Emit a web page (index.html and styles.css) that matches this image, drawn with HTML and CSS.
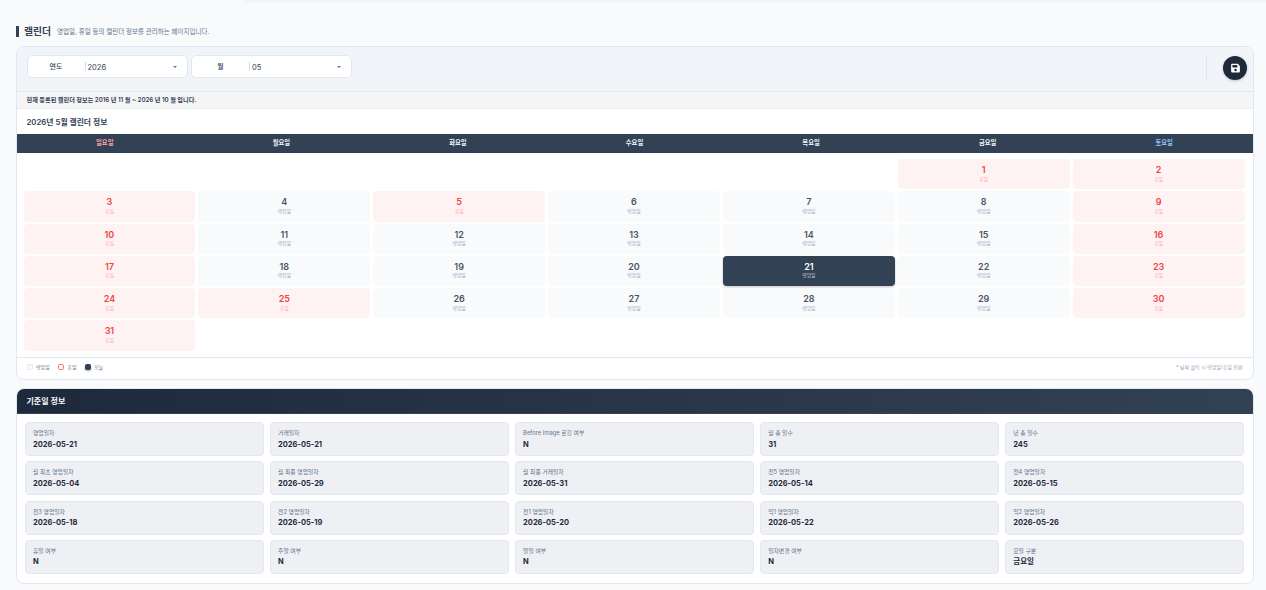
FILE: index.html
```html
<!DOCTYPE html>
<html lang="ko">
<head>
  <meta charset="UTF-8">
  <title>캘린더</title>
  <link rel="stylesheet" href="styles.css">
</head>
<body>
  <div class="top-strip"></div>

  <div class="page-title">
    <h1>캘린더</h1>
    <p>영업일, 휴일 등의 캘린더 정보를 관리하는 페이지입니다.</p>
  </div>

  <!-- Calendar card -->
  <section class="card">
    <div class="toolbar">
      <div class="select-box">
        <span class="select-label">연도</span>
        <span class="select-value">2026</span>
        <span class="caret"></span>
      </div>
      <div class="select-box">
        <span class="select-label">월</span>
        <span class="select-value">05</span>
        <span class="caret"></span>
      </div>
      <div class="toolbar-end">
        <button class="save-btn" aria-label="저장">
          <svg width="9" height="10" viewBox="0 0 448 512"><path fill="#fff" d="M64 32C29 32 0 61 0 96v320c0 35 29 64 64 64h320c35 0 64-29 64-64V173c0-17-7-33-19-45l-77-77c-12-12-28-19-45-19H64zm0 96c0-18 14-32 32-32h192c18 0 32 14 32 32v64c0 18-14 32-32 32H96c-18 0-32-14-32-32v-64zm160 160a64 64 0 1 1 0 128 64 64 0 1 1 0-128z"/></svg>
        </button>
      </div>
    </div>

    <div class="notice">현재 등록된 캘린더 정보는 2016 년 11 월 ~ 2026 년 10 월 입니다.</div>
    <h2 class="cal-title">2026년 5월 캘린더 정보</h2>

    <div class="week-head">
      <span class="sun">일요일</span>
      <span>월요일</span>
      <span>화요일</span>
      <span>수요일</span>
      <span>목요일</span>
      <span>금요일</span>
      <span class="sat">토요일</span>
    </div>

    <div class="cal-grid">
      <div class="blank"></div><div class="blank"></div><div class="blank"></div><div class="blank"></div><div class="blank"></div>
      <div class="day off"><b>1</b><small>휴일</small></div>
      <div class="day off"><b>2</b><small>휴일</small></div>

      <div class="day off"><b>3</b><small>휴일</small></div>
      <div class="day"><b>4</b><small>영업일</small></div>
      <div class="day off"><b>5</b><small>휴일</small></div>
      <div class="day"><b>6</b><small>영업일</small></div>
      <div class="day"><b>7</b><small>영업일</small></div>
      <div class="day"><b>8</b><small>영업일</small></div>
      <div class="day off"><b>9</b><small>휴일</small></div>

      <div class="day off"><b>10</b><small>휴일</small></div>
      <div class="day"><b>11</b><small>영업일</small></div>
      <div class="day"><b>12</b><small>영업일</small></div>
      <div class="day"><b>13</b><small>영업일</small></div>
      <div class="day"><b>14</b><small>영업일</small></div>
      <div class="day"><b>15</b><small>영업일</small></div>
      <div class="day off"><b>16</b><small>휴일</small></div>

      <div class="day off"><b>17</b><small>휴일</small></div>
      <div class="day"><b>18</b><small>영업일</small></div>
      <div class="day"><b>19</b><small>영업일</small></div>
      <div class="day"><b>20</b><small>영업일</small></div>
      <div class="day today"><b>21</b><small>영업일</small></div>
      <div class="day"><b>22</b><small>영업일</small></div>
      <div class="day off"><b>23</b><small>휴일</small></div>

      <div class="day off"><b>24</b><small>휴일</small></div>
      <div class="day off"><b>25</b><small>휴일</small></div>
      <div class="day"><b>26</b><small>영업일</small></div>
      <div class="day"><b>27</b><small>영업일</small></div>
      <div class="day"><b>28</b><small>영업일</small></div>
      <div class="day"><b>29</b><small>영업일</small></div>
      <div class="day off"><b>30</b><small>휴일</small></div>

      <div class="day off"><b>31</b><small>휴일</small></div>
    </div>

    <div class="legend">
      <span class="legend-item"><i class="swatch"></i>영업일</span>
      <span class="legend-item"><i class="swatch swatch-off"></i>휴일</span>
      <span class="legend-item"><i class="swatch swatch-today"></i>오늘</span>
      <span class="legend-note">* 날짜 클릭 시 영업일/휴일 전환</span>
    </div>
  </section>

  <!-- Base date info -->
  <section class="card info-card">
    <h2 class="info-head">기준일 정보</h2>
    <div class="info-grid">
      <div class="info"><label>영업일자</label><strong>2026-05-21</strong></div>
      <div class="info"><label>거래일자</label><strong>2026-05-21</strong></div>
      <div class="info"><label>Before Image 로깅 여부</label><strong>N</strong></div>
      <div class="info"><label>월 총 일수</label><strong>31</strong></div>
      <div class="info"><label>년 총 일수</label><strong>245</strong></div>

      <div class="info"><label>월 최초 영업일자</label><strong>2026-05-04</strong></div>
      <div class="info"><label>월 최종 영업일자</label><strong>2026-05-29</strong></div>
      <div class="info"><label>월 최종 거래일자</label><strong>2026-05-31</strong></div>
      <div class="info"><label>전5 영업일자</label><strong>2026-05-14</strong></div>
      <div class="info"><label>전4 영업일자</label><strong>2026-05-15</strong></div>

      <div class="info"><label>전3 영업일자</label><strong>2026-05-18</strong></div>
      <div class="info"><label>전2 영업일자</label><strong>2026-05-19</strong></div>
      <div class="info"><label>전1 영업일자</label><strong>2026-05-20</strong></div>
      <div class="info"><label>익1 영업일자</label><strong>2026-05-22</strong></div>
      <div class="info"><label>익2 영업일자</label><strong>2026-05-26</strong></div>

      <div class="info"><label>휴일 여부</label><strong>N</strong></div>
      <div class="info"><label>주말 여부</label><strong>N</strong></div>
      <div class="info"><label>말일 여부</label><strong>N</strong></div>
      <div class="info"><label>일자변경 여부</label><strong>N</strong></div>
      <div class="info"><label>요일 구분</label><strong>금요일</strong></div>
    </div>
  </section>
</body>
</html>
```

FILE: styles.css
```css
* {
  box-sizing: border-box;
}

body {
  margin: 0;
  padding: 0 12.5px 0 15.5px;
  height: 590px;
  overflow: hidden;
  background-color: #f8fafc;
  color: #1e293b;
  font-family: Inter, "Noto Sans CJK KR", sans-serif;
}

.top-strip {
  height: 3px;
  margin: 0 -12.5px 0 227.5px;
  background-color: #f1f5f9;
}

/* Page title */
.page-title {
  display: flex;
  align-items: center;
  gap: 6px;
  height: 11px;
  margin: 23px 0 9px 0;
  border-left: 3px solid #334155;
  padding: 0 0 1.5px 5.5px;
}

.page-title h1 {
  margin: 0;
  font-size: 9.8px;
  font-weight: 600;
  color: #334155;
}

.page-title p {
  margin: 0;
  font-size: 6.5px;
  color: #64748b;
}

/* Cards */
.card {
  background-color: #fff;
  border: 1px solid #e2e8f0;
  border-radius: 8px;
  overflow: hidden;
}

.toolbar {
  display: flex;
  align-items: flex-start;
  gap: 3.5px;
  height: 45px;
  padding: 8px 10px;
  background-color: #f1f5f9;
  border-bottom: 1px solid #e2e8f0;
}

.select-box {
  display: flex;
  align-items: center;
  width: 161px;
  height: 23px;
  background-color: #fff;
  border: 1px solid #e2e8f0;
  border-radius: 5px;
}

.select-label {
  width: 58px;
  border-right: 1px solid #d5dbe3;
  font-size: 7px;
  font-weight: 500;
  line-height: 9px;
  text-align: center;
  color: #334155;
}

.select-value {
  flex: 1;
  padding: 1px 0 0 2px;
  font-size: 7.5px;
  color: #334155;
}

.caret {
  margin-right: 10px;
  border-top: 2.5px solid #64748b;
  border-left: 2.5px solid transparent;
  border-right: 2.5px solid transparent;
}

.toolbar-end {
  display: flex;
  align-items: center;
  height: 25px;
  margin-left: auto;
  margin-right: -4.5px;
  padding-left: 16.5px;
  border-left: 1px solid #e2e8f0;
}

.save-btn {
  display: flex;
  align-items: center;
  justify-content: center;
  width: 24px;
  height: 24px;
  margin-top: 1px;
  padding: 0;
  border: none;
  border-radius: 50%;
  background-color: #1e293b;
  box-shadow: 0 1px 3px rgba(0,0,0,0.2);
}

.notice {
  height: 17px;
  padding-left: 10px;
  background-color: #f5f5f5;
  border-bottom: 1px solid #eceef3;
  font-size: 6.15px;
  font-weight: 600;
  line-height: 16.5px;
  color: #334155;
}

.cal-title {
  height: 25px;
  margin: 0;
  padding-left: 10px;
  font-size: 7.8px;
  font-weight: 600;
  line-height: 27px;
  color: #334155;
}

/* Calendar */
.week-head {
  display: grid;
  grid-template-columns: repeat(7, 1fr);
  height: 19px;
  background-color: #334155;
  font-size: 6.3px;
  font-weight: 600;
  line-height: 19px;
  text-align: center;
  color: #f1f5f9;
}

.week-head .sun {
  color: #fca5a5;
}

.week-head .sat {
  color: #93c5fd;
}

.cal-grid {
  display: grid;
  grid-template-columns: repeat(7, 1fr);
  grid-auto-rows: 30.3px;
  gap: 2px 3px;
  height: 204px;
  padding: 6px 8px 0 7px;
}

.day {
  display: flex;
  flex-direction: column;
  align-items: center;
  padding-top: 5px;
  background-color: #f8fafc;
  border-radius: 4px;
  color: #475569;
}

.day b {
  font-size: 9px;
  font-weight: 600;
  line-height: 11.5px;
}

.day small {
  font-size: 4.8px;
  line-height: 6px;
  color: #94a3b8;
}

.day.off {
  background-color: #fef2f2;
  color: #ef4444;
}

.day.off small {
  color: #fca5a5;
}

.day.today {
  background-color: #334155;
  color: #fff;
  box-shadow: 0 1px 3px rgba(0,0,0,0.25);
}

.day.today small {
  color: #cbd5e1;
}

.legend {
  display: flex;
  align-items: center;
  gap: 8px;
  height: 21.5px;
  padding: 0 10px 3px;
  border-top: 1px solid #e2e8f0;
}

.legend-item {
  display: flex;
  align-items: center;
  gap: 3px;
  font-size: 5px;
  color: #64748b;
}

.swatch {
  width: 6.5px;
  height: 6.5px;
  background-color: #f8fafc;
  border: 1px solid #e2e8f0;
  border-radius: 1.5px;
}

.swatch-off {
  background-color: #fff;
  border-color: #f87171;
}

.swatch-today {
  background-color: #334155;
  border-color: #334155;
  box-shadow: 0 1px 2px rgba(51,65,85,0.4);
}

.legend-note {
  margin-left: auto;
  font-size: 5px;
  color: #94a3b8;
}

/* Base date info */
.info-card {
  margin-top: 8px;
  height: 196px;
}

.info-head {
  height: 25.5px;
  margin: 0;
  padding-left: 10px;
  background: linear-gradient(90deg, #1e293b, #334155);
  border-bottom: 1px solid #334155;
  font-size: 8px;
  font-weight: 600;
  line-height: 25px;
  color: #f8fafc;
}

.info-grid {
  display: grid;
  grid-template-columns: repeat(5, 1fr);
  grid-auto-rows: 34px;
  gap: 5.3px;
  padding: 8px 8px 0;
}

.info {
  padding: 6px 7.5px 0;
  background-color: #eef0f3;
  border: 1px solid #e2e8f0;
  border-radius: 4px;
}

.info label {
  display: block;
  font-size: 5.8px;
  line-height: 8px;
  color: #64748b;
}

.info strong {
  display: block;
  margin-top: 1.5px;
  font-size: 7.5px;
  font-weight: 700;
  line-height: 12px;
  color: #1e293b;
}
```
